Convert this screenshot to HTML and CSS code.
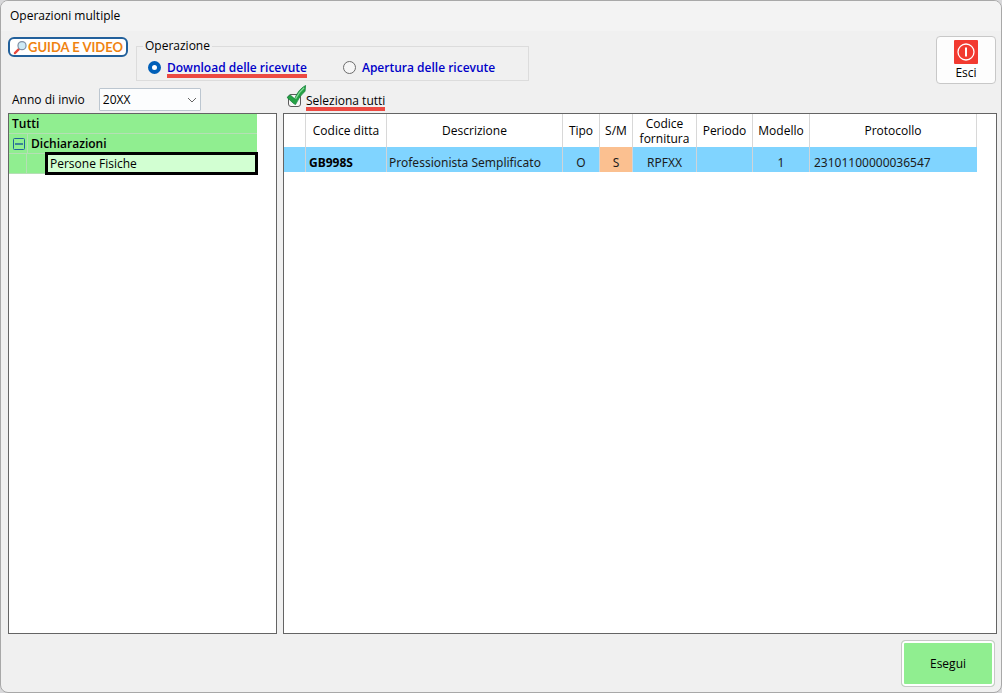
FILE: index.html
```html
<!DOCTYPE html>
<html lang="it">
<head>
<meta charset="utf-8">
<title>Operazioni multiple</title>
<link rel="stylesheet" href="styles.css">
</head>
<body>
<div class="window">
  <header class="titlebar"><h1 class="title">Operazioni multiple</h1></header>

  <div class="toolbar">
    <button class="guide" type="button">
      <svg class="guide-icon" viewBox="0 0 16 16" aria-hidden="true">
        <path d="M2 14 6.5 9.5" stroke="#e8483c" stroke-width="2.4" stroke-linecap="round"/>
        <circle cx="9.6" cy="6" r="4.3" fill="#cdeaf5" stroke="#8292a6" stroke-width="1.3"/>
      </svg>
      <span>GUIDA E VIDEO</span>
    </button>
    <fieldset class="operation">
      <legend>Operazione</legend>
      <label class="option"><input class="radio" type="radio" name="op" checked><span class="marked">Download delle ricevute</span></label>
      <label class="option"><input class="radio" type="radio" name="op"><span>Apertura delle ricevute</span></label>
    </fieldset>
    <button class="exit" type="button">
      <svg class="exit-icon" viewBox="0 0 24 24" aria-hidden="true">
        <rect width="24" height="24" rx="1" fill="#f23a30"/>
        <circle cx="12" cy="12" r="8" fill="none" stroke="#fff" stroke-width="1.3"/>
        <path d="M12 7.5v9" stroke="#fff" stroke-width="2"/>
      </svg>
      <span>Esci</span>
    </button>
  </div>

  <div class="filters">
    <div class="year">
      <label for="year">Anno di invio</label>
      <div class="select-wrap">
        <select id="year" class="select"><option>20XX</option></select>
        <svg class="chevron" viewBox="0 0 10 6" aria-hidden="true"><path d="M1 1l4 4 4-4" fill="none" stroke="#666" stroke-width="1"/></svg>
      </div>
    </div>
    <label class="select-all">
      <span class="check-wrap">
        <input class="check" type="checkbox" checked>
        <svg class="tick" viewBox="0 0 22 22" aria-hidden="true"><path d="M1 13.5 4.5 11 9 15Q13 5 20.5 1L20 7Q14 12 10 21L8 20Z" fill="#25a244" stroke="#13803a" stroke-width=".8"/><path d="M10 15Q13.5 8 19 3.5" fill="none" stroke="#83d998" stroke-width="1.4"/></svg>
      </span>
      <span class="marked">Seleziona tutti</span>
    </label>
  </div>

  <main class="panels">
    <nav class="panel">
      <ul class="tree">
        <li class="node root">Tutti</li>
        <li class="node branch">
          <button class="toggle" type="button" aria-label="Comprimi"><svg viewBox="0 0 12 12" aria-hidden="true"><rect x=".5" y=".5" width="11" height="11" rx="1" fill="none" stroke="#1f6399"/><path d="M2 6h8" stroke="#1f6399" stroke-width="1.4"/></svg></button>
          <span class="branch-name">Dichiarazioni</span>
        </li>
        <li class="node leaf"><span class="indent"></span><span class="current">Persone Fisiche</span></li>
      </ul>
    </nav>
    <section class="panel">
      <table class="grid">
        <colgroup><col class="c-mark"><col class="c-code"><col class="c-desc"><col class="c-type"><col class="c-sm"><col class="c-supply"><col class="c-period"><col class="c-model"><col></colgroup>
        <thead>
          <tr><th></th><th>Codice ditta</th><th>Descrizione</th><th>Tipo</th><th>S/M</th><th>Codice fornitura</th><th>Periodo</th><th>Modello</th><th>Protocollo</th></tr>
        </thead>
        <tbody>
          <tr><td></td><td class="code">GB998S</td><td>Professionista Semplificato</td><td class="mid">O</td><td class="mid single">S</td><td class="mid">RPFXX</td><td></td><td class="mid">1</td><td class="protocol">23101100000036547</td></tr>
        </tbody>
      </table>
    </section>
  </main>

  <footer class="footer"><button class="run" type="button">Esegui</button></footer>
</div>
</body>
</html>
```

FILE: styles.css
```css
* { box-sizing: border-box; }

body {
  margin: 0;
  background: #d8d8da;
  color: #000;
  font: 12px/16px "Open Sans", "Noto Sans", sans-serif;
}

button, select, input { font: inherit; color: inherit; }

.window {
  display: flex;
  flex-direction: column;
  min-height: 100vh;
  border: 1px solid #a8a8a8;
  border-radius: 8px;
  background: #f0f0f0;
  overflow: hidden;
}

.titlebar { padding: 7px 9px; background: #f3f3f3; }
.title { margin: 0; font-size: 12px; font-weight: 400; line-height: 16px; }

.toolbar {
  display: flex;
  align-items: flex-start;
  gap: 8px;
  padding: 5px 5px 0 7px;
}

.guide {
  display: flex;
  align-items: center;
  justify-content: center;
  width: 120px;
  height: 20px;
  margin-top: 1px;
  padding: 0;
  border: 2px solid #22609b;
  border-radius: 6px;
  background: #fff;
  color: #f08310;
  font: 700 13px/16px Lato, sans-serif;
  white-space: nowrap;
}
.guide-icon { width: 15px; height: 15px; fill: none; flex: none; }

.operation {
  display: flex;
  gap: 36px;
  width: 393px;
  height: 43px;
  margin: 2px 0 0;
  padding: 6px 11px 0;
  border: 1px solid #dcdcdc;
}
.operation legend { margin-left: -5px; padding: 0 2px; }

.option {
  display: flex;
  align-items: flex-start;
  gap: 6px;
  color: #0000c8;
  font-weight: 600;
  white-space: nowrap;
}

.radio {
  appearance: none;
  width: 13px;
  height: 13px;
  margin: 1px 0 0;
  border: 1px solid #6c6c6c;
  border-radius: 50%;
  background: #f6f6f6;
}
.radio:checked { border: 4px solid #005fb8; background: #fff; }

.marked {
  height: 18px;
  border-bottom: 4px solid #ec4a42;
  line-height: 16px;
  white-space: nowrap;
}

.exit {
  display: flex;
  flex-direction: column;
  align-items: center;
  gap: 1px;
  width: 60px;
  height: 48px;
  margin-left: auto;
  padding: 3px 0 0;
  border: 1px solid #c8c8c8;
  border-radius: 4px;
  background: #fdfdfd;
}
.exit-icon { width: 24px; height: 24px; }

.filters, .panels {
  display: grid;
  grid-template-columns: 269px 1fr;
  gap: 6px;
  padding: 0 4px 0 7px;
}
.filters { height: 29px; align-items: end; grid-template-rows: 29px; }

.year {
  display: flex;
  align-items: center;
  gap: 14px;
  padding: 0 0 2px 4px;
}
.select-wrap { display: grid; align-items: center; width: 102px; }
.select {
  grid-area: 1 / 1;
  appearance: none;
  width: 100%;
  height: 23px;
  padding: 0 3px;
  border: 1px solid #bcc6d0;
  border-radius: 1px;
  background: #fcfdfe;
}
.chevron { grid-area: 1 / 1; justify-self: end; width: 10px; height: 6px; margin-right: 4px; pointer-events: none; }

.select-all { display: flex; align-items: flex-end; justify-self: start; padding: 0 0 2px 3px; }
.check-wrap { position: relative; width: 20px; height: 18px; }
.check {
  appearance: none;
  display: block;
  width: 13px;
  height: 13px;
  margin: 1px 0 0 2px;
  border: 1px solid #5c5c5c;
  border-radius: 3px;
  background: #f8f8f8;
}
.tick { position: absolute; left: 0; top: -9px; width: 21px; height: 22px; }

.panels { flex: 1; }
.panel { min-width: 0; border: 1px solid #646464; background: #fff; }

.tree { width: 248px; margin: 0; padding: 0; list-style: none; }
.node {
  display: flex;
  align-items: center;
  height: 20px;
  border-bottom: 1px solid #b5dfb5;
  background: #90ee90;
  font-weight: 600;
}
.root { padding-left: 3px; }
.toggle { width: 18px; height: 20px; padding: 0 2px 0 4px; border: 0; background: none; }
.toggle svg { display: block; width: 12px; height: 12px; }
.branch-name { padding-left: 3px; border-left: 1px solid #b5dfb5; line-height: 19px; }
.indent { flex: none; width: 18px; height: 19px; border-right: 1px solid #b5dfb5; }
.current {
  flex: 1;
  height: 23px;
  margin: 0 -1px 0 18px;
  padding-left: 2px;
  border: 3px solid #000;
  background: #d2ffd2;
  font-weight: 400;
  line-height: 17px;
}

.grid {
  width: calc(100% - 19px);
  border-collapse: separate;
  border-spacing: 0;
  table-layout: fixed;
}
.c-mark { width: 22px; }
.c-code { width: 81px; }
.c-desc { width: 176px; }
.c-type { width: 37px; }
.c-sm { width: 33px; }
.c-supply { width: 64px; }
.c-period { width: 56px; }
.c-model { width: 57px; }
.grid th {
  height: 33px;
  padding: 0;
  border-right: 1px solid #d8d8d8;
  font-weight: 400;
  line-height: 15px;
}
.grid td {
  height: 25px;
  padding: 6px 0 0 2px;
  border-right: 1px solid #d0d4d8;
  background: #80d4ff;
  color: #1c1c1c;
  font-family: "Noto Sans", "Open Sans", sans-serif;
  white-space: nowrap;
}
.grid td:last-child { border-right: 0; }
.grid .mid { padding-left: 0; text-align: center; }
.grid .code { padding-left: 3px; color: #000; font-weight: 700; }
.grid .single { background: #fbc090; }
.grid .protocol { padding-left: 4px; }

.footer { display: flex; justify-content: flex-end; padding: 6px 6px 5px; }
.run {
  width: 94px;
  height: 47px;
  border: 1px solid #c8c8c8;
  border-radius: 4px;
  background: #90ee90;
  box-shadow: inset 0 0 0 2px #fff;
}
```
